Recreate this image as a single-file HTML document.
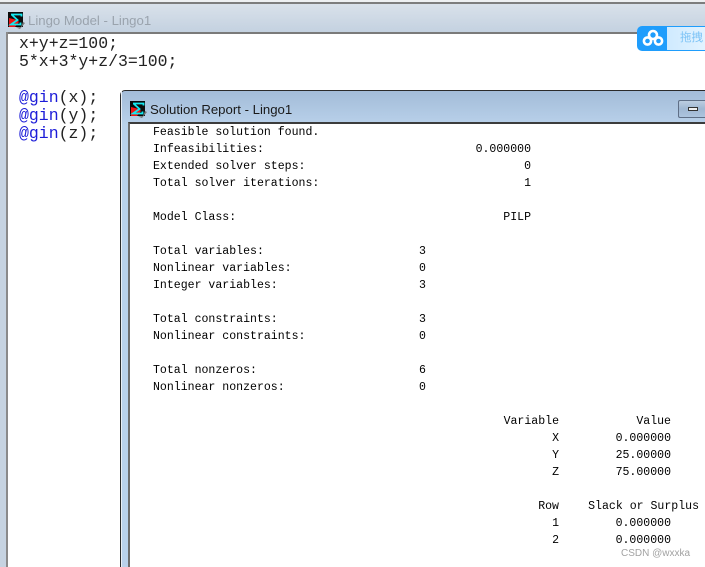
<!DOCTYPE html>
<html>
<head>
<meta charset="utf-8">
<style>
html,body{margin:0;padding:0;background:#fff;}
#p{position:relative;width:705px;height:567px;overflow:hidden;background:#fff;}
.a{position:absolute;}
.t{position:absolute;font-family:"Liberation Sans","Noto Sans CJK SC",sans-serif;font-size:13px;line-height:16px;white-space:pre;}
.m{position:absolute;font-family:"Liberation Mono",monospace;font-size:16.5px;line-height:18px;white-space:pre;color:#222;left:19px;}
.m b{font-weight:normal;color:#1c1cd8;}
.r{position:absolute;font-family:"Liberation Mono",monospace;font-size:11.55px;line-height:17px;height:17px;white-space:pre;color:#000;}
</style>
</head>
<body>
<div id="p">
  <div class="a" style="left:0;top:0;width:705px;height:3px;background:#eef0f2"></div>
  <div class="a" style="left:0;top:2px;width:705px;height:2px;background:#7d7d7d"></div>
  <div class="a" style="left:0;top:4px;width:705px;height:29px;background:linear-gradient(#d9e1ea,#c3d1e0)"></div>
  <div class="a" style="left:0;top:32px;width:705px;height:2px;background:#7a7a7a"></div>
  <div class="a" style="left:0;top:32px;width:6px;height:535px;background:#c6d3e1"></div>
  <div class="a" style="left:6px;top:32px;width:2px;height:535px;background:#8a8a8a"></div>

  <svg class="a" style="left:8px;top:12px" width="17" height="17" viewBox="0 0 17 17">
    <rect x="0" y="0" width="15" height="15" fill="#0c0c0c"/>
    <path d="M1 6L9 8L11 10L7 15L1 15Z" fill="#f01414"/>
    <path d="M3 2.5H13.5V4.5M3.5 2.5L9.5 8L3 12.5H12.5V10.5" fill="none" stroke="#14e8f0" stroke-width="1.8"/>
    <path d="M15 10L17 11L12 17L8 15.5L13 15Z" fill="#777"/>
  </svg>
  <div class="t" style="left:28px;top:13px;color:#9aa3ad;font-size:13.2px">Lingo Model - Lingo1</div>

  <div class="m" style="top:35px">x+y+z=100;</div>
  <div class="m" style="top:53px">5*x+3*y+z/3=100;</div>
  <div class="m" style="top:89px"><b>@gin</b>(x);</div>
  <div class="m" style="top:107px"><b>@gin</b>(y);</div>
  <div class="m" style="top:125px"><b>@gin</b>(z);</div>

  <!-- report window -->
  <div class="a" style="left:120px;top:90px;width:600px;height:490px;background:linear-gradient(#a3bcd8 0,#b9d1ea 34px);border:1px solid #2a2a2a;border-right:0;border-radius:5px 0 0 0;box-sizing:border-box"></div>
  <div class="a" style="left:121px;top:91px;width:1px;height:476px;background:#e8eef5"></div>
  <div class="a" style="left:128px;top:122px;width:577px;height:445px;background:#fff;border-left:2px solid #6e6e6e;border-top:2px solid #3c3c3c;box-sizing:border-box"></div>

  <svg class="a" style="left:130px;top:101px" width="17" height="17" viewBox="0 0 17 17">
    <rect x="0" y="0" width="15" height="15" fill="#0c0c0c"/>
    <path d="M1 6L9 8L11 10L7 15L1 15Z" fill="#f01414"/>
    <path d="M3 2.5H13.5V4.5M3.5 2.5L9.5 8L3 12.5H12.5V10.5" fill="none" stroke="#14e8f0" stroke-width="1.8"/>
    <path d="M15 10L17 11L12 17L8 15.5L13 15Z" fill="#777"/>
  </svg>
  <div class="t" style="left:150px;top:102px;color:#1a1a1a;font-size:13.2px">Solution Report - Lingo1</div>

  <div class="a" style="left:678px;top:100px;width:27px;height:18px;box-sizing:border-box;border:1px solid #5f6f86;border-right:0;border-radius:2px 0 0 2px;background:linear-gradient(#bccde0,#9fb7d2 50%,#adc4de)"></div>
  <div class="a" style="left:688px;top:107px;width:10px;height:4px;box-sizing:border-box;border:1px solid #333;background:#f0f0f0"></div>

  <div class="r" style="left:153px;top:124px">Feasible solution found.</div>
  <div class="r" style="left:153px;top:141px">Infeasibilities:</div>
  <div class="r" style="right:174px;top:141px">0.000000</div>
  <div class="r" style="left:153px;top:158px">Extended solver steps:</div>
  <div class="r" style="right:174px;top:158px">0</div>
  <div class="r" style="left:153px;top:175px">Total solver iterations:</div>
  <div class="r" style="right:174px;top:175px">1</div>

  <div class="r" style="left:153px;top:209px">Model Class:</div>
  <div class="r" style="right:174px;top:209px">PILP</div>

  <div class="r" style="left:153px;top:243px">Total variables:</div>
  <div class="r" style="left:419px;top:243px">3</div>
  <div class="r" style="left:153px;top:260px">Nonlinear variables:</div>
  <div class="r" style="left:419px;top:260px">0</div>
  <div class="r" style="left:153px;top:277px">Integer variables:</div>
  <div class="r" style="left:419px;top:277px">3</div>

  <div class="r" style="left:153px;top:311px">Total constraints:</div>
  <div class="r" style="left:419px;top:311px">3</div>
  <div class="r" style="left:153px;top:328px">Nonlinear constraints:</div>
  <div class="r" style="left:419px;top:328px">0</div>

  <div class="r" style="left:153px;top:362px">Total nonzeros:</div>
  <div class="r" style="left:419px;top:362px">6</div>
  <div class="r" style="left:153px;top:379px">Nonlinear nonzeros:</div>
  <div class="r" style="left:419px;top:379px">0</div>

  <div class="r" style="right:146px;top:413px">Variable</div>
  <div class="r" style="right:34px;top:413px">Value</div>
  <div class="r" style="right:146px;top:430px">X</div>
  <div class="r" style="right:34px;top:430px">0.000000</div>
  <div class="r" style="right:146px;top:447px">Y</div>
  <div class="r" style="right:34px;top:447px">25.00000</div>
  <div class="r" style="right:146px;top:464px">Z</div>
  <div class="r" style="right:34px;top:464px">75.00000</div>

  <div class="r" style="right:146px;top:498px">Row</div>
  <div class="r" style="right:6px;top:498px">Slack or Surplus</div>
  <div class="r" style="right:146px;top:515px">1</div>
  <div class="r" style="right:34px;top:515px">0.000000</div>
  <div class="r" style="right:146px;top:532px">2</div>
  <div class="r" style="right:34px;top:532px">0.000000</div>

  <div class="t" style="left:621px;top:547px;font-size:10px;line-height:14px;color:#a2a2a2">CSDN @wxxka</div>

  <!-- cloud widget -->
  <div class="a" style="left:637px;top:26px;width:70px;height:25px;box-sizing:border-box;background:#1f9dfc;border-radius:5px 0 0 5px"></div>
  <div class="a" style="left:667px;top:27px;width:38px;height:23px;background:linear-gradient(90deg,#cfeaff,#e2f3ff)"></div>
  <svg class="a" style="left:642px;top:29px" width="22" height="18" viewBox="0 0 22 18">
    <circle cx="11" cy="6" r="4" fill="none" stroke="#fff" stroke-width="2.6"/>
    <circle cx="5.5" cy="12" r="3.6" fill="none" stroke="#fff" stroke-width="2.6"/>
    <circle cx="16.5" cy="12" r="3.6" fill="none" stroke="#fff" stroke-width="2.6"/>
  </svg>
  <div class="t" style="left:680px;top:31px;font-size:11.5px;line-height:15px;color:#7cc3f6">拖拽</div>
</div>
</body>
</html>
